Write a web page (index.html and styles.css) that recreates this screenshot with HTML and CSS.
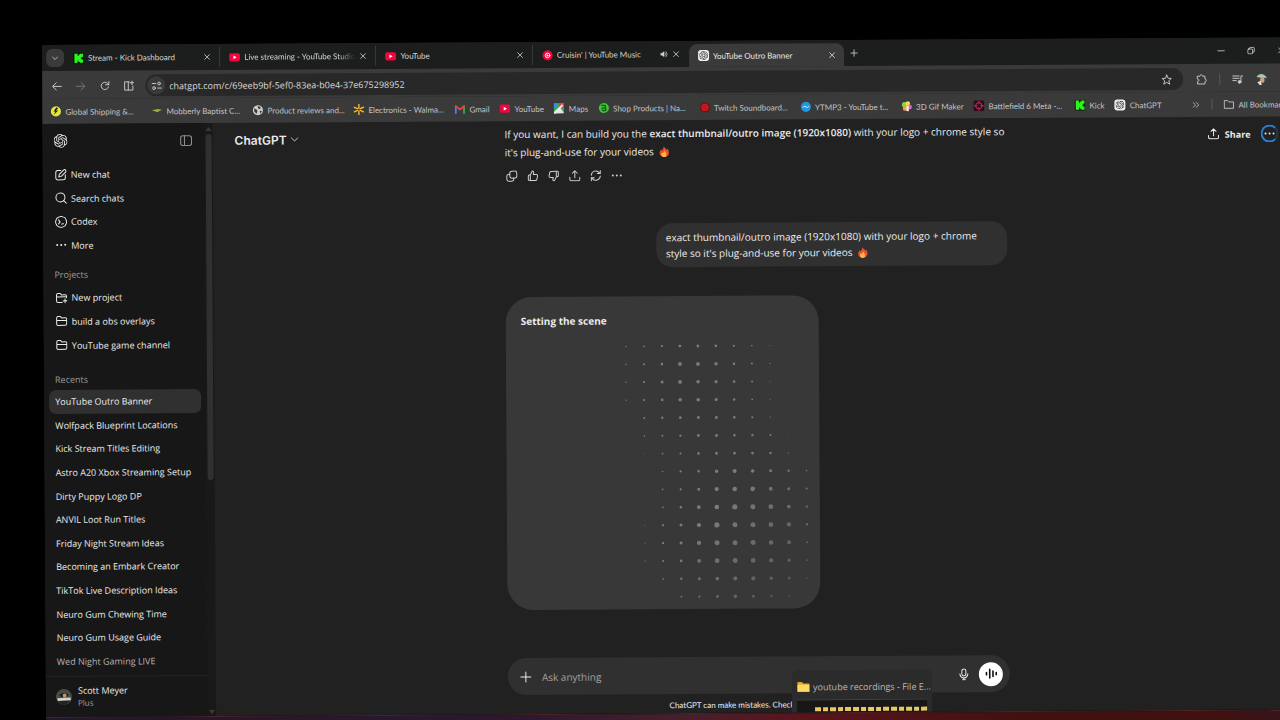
FILE: index.html
```
<!DOCTYPE html>
<html lang="en">

<head>
    <meta charset="UTF-8">
    <meta name="viewport" content="width=device-width, initial-scale=1.0">
    <title>YouTube Outro Banner</title>
    <link rel="stylesheet" href="styles.css">
</head>

<body>
    <!-- shared icons -->
    <svg class="sprite" aria-hidden="true">
        <symbol id="close" viewBox="0 0 10 10"><path d="M2 2l6 6M8 2L2 8"/></symbol>
        <symbol id="dots" viewBox="0 0 24 24"><g fill="currentColor" stroke="none"><circle cx="4" cy="12" r="2"/><circle cx="12" cy="12" r="2"/><circle cx="20" cy="12" r="2"/></g></symbol>
        <symbol id="folder" viewBox="0 0 24 24"><path d="M2 19V6a3 3 0 0 1 3-3h4l3 3h7a3 3 0 0 1 3 3v9a3 3 0 0 1-3 3H5a3 3 0 0 1-3-3zM2 11h20"/></symbol>
        <symbol id="upload" viewBox="0 0 24 24"><path d="M12 16V2M7 7l5-5 5 5M2 15v4a3 3 0 0 0 3 3h14a3 3 0 0 0 3-3v-4"/></symbol>
        <symbol id="thumb" viewBox="0 0 24 24"><path d="M7 10v11M7 10l4-8c2 0 3 1 3 3l-1 4h6a2.500 2.500 0 0 1 2.500 3l-1.500 7a3 3 0 0 1-3 2H5a2 2 0 0 1-2-2v-7a2 2 0 0 1 2-2z"/></symbol>
        <symbol id="youtube" viewBox="0 0 24 24"><rect x="0" y="3" width="24" height="18" rx="5" fill="#f0053c" stroke="none"/><path d="M9.500 8v8l7-4z" fill="#fff" stroke="none"/></symbol>
        <symbol id="kick" viewBox="0 0 24 24"><rect width="24" height="24" fill="#0b1a08" stroke="none"/><path d="M3 2h7v5h2V4h3V2h7v7h-3v2h-2v2h2v2h3v7h-7v-2h-3v-3h-2v5H3z" fill="#2af51c" stroke="none"/></symbol>
        <symbol id="openai" viewBox="0 0 24 24"><path fill="currentColor" stroke="none" d="M22.2819 9.8211a5.9847 5.9847 0 0 0-.5157-4.9108 6.0462 6.0462 0 0 0-6.5098-2.9A6.0651 6.0651 0 0 0 4.9807 4.1818a5.9847 5.9847 0 0 0-3.9977 2.9 6.0462 6.0462 0 0 0 .7427 7.0966 5.98 5.98 0 0 0 .511 4.9107 6.051 6.051 0 0 0 6.5146 2.9001A5.9847 5.9847 0 0 0 13.2599 24a6.0557 6.0557 0 0 0 5.7718-4.2058 5.9894 5.9894 0 0 0 3.9977-2.9001 6.0557 6.0557 0 0 0-.7475-7.0729zm-9.022 12.6081a4.4755 4.4755 0 0 1-2.8764-1.0408l.1419-.0804 4.7783-2.7582a.7948.7948 0 0 0 .3927-.6813v-6.7369l2.02 1.1686a.071.071 0 0 1 .038.052v5.5826a4.504 4.504 0 0 1-4.4945 4.4944zm-9.6607-4.1254a4.4708 4.4708 0 0 1-.5346-3.0137l.142.0852 4.783 2.7582a.7712.7712 0 0 0 .7806 0l5.8428-3.3685v2.3324a.0804.0804 0 0 1-.0332.0615L9.74 19.9502a4.4992 4.4992 0 0 1-6.1408-1.6464zM2.3408 7.8956a4.485 4.485 0 0 1 2.3655-1.9728V11.6a.7664.7664 0 0 0 .3879.6765l5.8144 3.3543-2.0201 1.1685a.0757.0757 0 0 1-.071 0l-4.8303-2.7865A4.504 4.504 0 0 1 2.3408 7.872zm16.5963 3.8558L13.1038 8.364 15.1192 7.2a.0757.0757 0 0 1 .071 0l4.8303 2.7913a4.4944 4.4944 0 0 1-.6765 8.1042v-5.6772a.79.79 0 0 0-.407-.667zm2.0107-3.0231l-.142-.0852-4.7735-2.7818a.7759.7759 0 0 0-.7854 0L9.409 9.2297V6.8974a.0662.0662 0 0 1 .0284-.0615l4.8303-2.7866a4.4992 4.4992 0 0 1 6.6802 4.66zM8.3065 12.863l-2.02-1.1638a.0804.0804 0 0 1-.038-.0567V6.0742a4.4992 4.4992 0 0 1 7.3757-3.4537l-.142.0805L8.704 5.459a.7948.7948 0 0 0-.3927.6813zm1.0976-2.3654l2.602-1.4998 2.6069 1.4998v2.9994l-2.5974 1.4997-2.6067-1.4997Z"/></symbol>
        <symbol id="fire" viewBox="0 0 24 24"><g stroke="none"><path d="M11 0c1 3 5 5 7 8 1-1 1-2 1-3 3 4 4 8 3 12-1 4-5 7-10 7S2 21 2 15c0-4 2-6 4-9 0 2 0 3 1 4 2-3 4-6 4-10z" fill="#e8502a"/><path d="M12 9c1 3 5 4 5 9 0 3-2 6-5 6s-6-2-6-6c0-2 1-4 2-5 0 1 1 2 2 2 1-2 2-3 2-6z" fill="#ffb54a"/></g></symbol>
    </svg>

    <div class="desktop">
        <div class="browser">
            <div class="tab-strip">
                <button class="tab-search" aria-label="Search tabs"><svg class="icon tiny" viewBox="0 0 10 10"><path d="M2 4l3 3 3-3"/></svg></button>
                <div class="tabs">
                    <div class="tab">
                        <svg class="icon small"><use href="#kick"/></svg>
                        <span class="tab-title">Stream - Kick Dashboard</span>
                        <button aria-label="Close tab"><svg class="icon tiny"><use href="#close"/></svg></button>
                    </div>
                    <div class="tab">
                        <svg class="icon small"><use href="#youtube"/></svg>
                        <span class="tab-title fade">Live streaming - YouTube Studio</span>
                        <button aria-label="Close tab"><svg class="icon tiny"><use href="#close"/></svg></button>
                    </div>
                    <div class="tab">
                        <svg class="icon small"><use href="#youtube"/></svg>
                        <span class="tab-title">YouTube</span>
                        <button aria-label="Close tab"><svg class="icon tiny"><use href="#close"/></svg></button>
                    </div>
                    <div class="tab">
                        <svg class="icon small" viewBox="0 0 24 24"><circle cx="12" cy="12" r="11" fill="#f0053c" stroke="none"/><circle cx="12" cy="12" r="5" stroke="#fff"/><path d="M10 9v6l5-3z" fill="#fff" stroke="none"/></svg>
                        <span class="tab-title">Cruisin' | YouTube Music</span>
                        <button aria-label="Mute tab"><svg class="icon tiny" viewBox="0 0 24 24"><path d="M2 9v6h4l6 5V4L6 9z" fill="currentColor"/><path d="M15 8q4 4 0 8M18 4q7 8 0 16" stroke-width="2"/></svg></button>
                        <button aria-label="Close tab"><svg class="icon tiny"><use href="#close"/></svg></button>
                    </div>
                    <div class="tab active">
                        <span class="app-icon"><svg class="icon"><use href="#openai"/></svg></span>
                        <span class="tab-title">YouTube Outro Banner</span>
                        <button aria-label="Close tab"><svg class="icon tiny"><use href="#close"/></svg></button>
                    </div>
                </div>
                <button class="new-tab" aria-label="New tab"><svg class="icon tiny" viewBox="0 0 10 10"><path d="M5 1v8M1 5h8"/></svg></button>
                <div class="window-controls">
                    <button aria-label="Minimize"><svg class="icon tiny" viewBox="0 0 10 10"><path d="M1 5h8"/></svg></button>
                    <button aria-label="Restore"><svg class="icon tiny" viewBox="0 0 10 10"><path d="M3 3V2q0-1 1-1h4q1 0 1 1v4q0 1-1 1H7"/><rect x="1" y="3" width="6" height="6" rx="1"/></svg></button>
                    <button aria-label="Close window"><svg class="icon tiny"><use href="#close"/></svg></button>
                </div>
            </div>

            <div class="toolbar">
                <button aria-label="Back"><svg class="icon small" viewBox="0 0 24 24"><path d="M22 12H4M11 4l-8 8 8 8"/></svg></button>
                <button class="dim" aria-label="Forward"><svg class="icon small" viewBox="0 0 24 24"><path d="M2 12h18M13 4l8 8-8 8"/></svg></button>
                <button aria-label="Reload"><svg class="icon small" viewBox="0 0 24 24"><path d="M20 14a8 8 0 1 1-2-8l3 3M21 2v7h-7"/></svg></button>
                <button aria-label="Split view"><svg class="icon small" viewBox="0 0 24 24"><path d="M13 3H3v18h18V12M11 3v18M19 1v8M15 5h8"/></svg></button>
                <div class="address-bar">
                    <button class="site-info" aria-label="Site information"><svg class="icon small" viewBox="0 0 24 24"><path d="M2 7h8M14 17h8"/><circle cx="17" cy="7" r="3"/><circle cx="6" cy="17" r="3"/></svg></button>
                    <input type="text" aria-label="Address" value="chatgpt.com/c/69eeb9bf-5ef0-83ea-b0e4-37e675298952">
                    <button aria-label="Bookmark this page"><svg class="icon small" viewBox="0 0 24 24"><path d="M12 2l3 7 7 .500-5.500 5 2 7.500-6.500-4-6.500 4 2-7.500L2 9.500 9 9z"/></svg></button>
                </div>
                <div class="toolbar-end">
                    <button aria-label="Extensions"><svg class="icon small" viewBox="0 0 24 24"><path d="M3 5h5c0-4 6-4 6 0h5v6c4 0 4 6 0 6v5H3v-6c4 0 4-5 0-5z"/></svg></button>
                    <span class="divider"></span>
                    <button aria-label="Media controls"><svg class="icon small" viewBox="0 0 24 24"><path d="M1 5h14M1 10h14M1 15h8M19 17V5h4"/><circle cx="16" cy="18" r="3" fill="currentColor"/></svg></button>
                    <button aria-label="Profile"><svg class="icon medium" viewBox="0 0 24 24"><g stroke="none"><circle cx="12" cy="12" r="11" fill="#34413c"/><path d="M2 8Q8 0 16 4l6 5-8 1z" fill="#a6c9b8"/><rect x="9" y="8" width="8" height="11" rx="4" fill="#d49a85"/><path d="M4 18l6-3 2 8H8z" fill="#e6dccf"/></g></svg></button>
                </div>
            </div>

            <nav class="bookmarks" aria-label="Bookmarks">
                <a class="wide" href="#"><svg class="icon small" viewBox="0 0 24 24"><g stroke="none"><circle cx="12" cy="12" r="11" fill="#e4e63c"/><path d="M13 3l-6 9h4l-4 8 10-10h-5l5-5z" fill="#222"/></g></svg>Global Shipping &amp;...</a>
                <a class="wide" href="#"><svg class="icon small" viewBox="0 0 24 24"><path d="M1 11l12-3 10 2-10 5z" fill="#a5a832" stroke="none"/></svg>Mobberly Baptist C...</a>
                <a class="wide" href="#"><svg class="icon small" viewBox="0 0 24 24"><g stroke="none"><circle cx="12" cy="12" r="11" fill="#cfcfcf"/><path d="M4 8l6 3 1 4-2 5-5-5zM12 3l6 2-1 5-5-2zM16 13l5 1-4 6z" fill="#3c3c3c"/></g></svg>Product reviews and...</a>
                <a class="wide" href="#"><svg class="icon small" viewBox="0 0 24 24"><path d="M12 1v8M12 15v8M2 7l7 3M15 14l7 3M2 17l7-3M15 10l7-3" stroke="#f5bb35" stroke-width="3"/></svg>Electronics - Walma...</a>
                <a href="#"><svg class="icon small" viewBox="0 0 24 24"><g fill="none" stroke-width="4"><path d="M3 21V6" stroke="#4285f4"/><path d="M21 21V6" stroke="#34a853"/><path d="M3 6l9 7 9-7" stroke="#ea4335"/></g></svg>Gmail</a>
                <a href="#"><svg class="icon small"><use href="#youtube"/></svg>YouTube</a>
                <a href="#"><svg class="icon small" viewBox="0 0 24 24"><g stroke="none"><path d="M1 1h22v22H1z" fill="#34a853"/><path d="M1 23L15 9l8 14z" fill="#e4e4e4"/><path d="M1 1h11l-9 10H1z" fill="#4285f4"/><path d="M12 5a5 5 0 0 1 11 0c0 4-4 5-5 10-2-5-6-6-6-10z" fill="#ea4335"/><path d="M1 20L19 3l2 4L5 23H1z" fill="#e8edf5"/></g></svg>Maps</a>
                <a class="wide" href="#"><svg class="icon small" viewBox="0 0 24 24"><circle cx="12" cy="12" r="11" fill="#3cc92e" stroke="none"/><path d="M7 6h5q5 0 3 4-2 3-7 2M8 16q2 3 8 1v-4" stroke="#16581a" stroke-width="3"/></svg>Shop Products | Na...</a>
                <a class="wide" href="#"><svg class="icon small" viewBox="0 0 24 24"><circle cx="12" cy="12" r="11" fill="#790d12" stroke="none"/><circle cx="12" cy="12" r="7" fill="#b9171c" stroke="#dc2026"/></svg>Twitch Soundboard...</a>
                <a class="wide" href="#"><svg class="icon small" viewBox="0 0 24 24"><circle cx="12" cy="12" r="11" fill="#2196e3" stroke="none"/><path d="M6 13q3-5 6-1t6-1" stroke="#fff"/></svg>YTMP3 - YouTube t...</a>
                <a href="#"><svg class="icon small" viewBox="0 0 24 24"><g stroke="none"><circle cx="7" cy="9" r="6" fill="#8bd03e"/><circle cx="14" cy="6" r="5" fill="#f4dd4c"/><circle cx="18" cy="14" r="5" fill="#e765b7"/><circle cx="8" cy="17" r="5" fill="#f3a33b"/><path d="M11 11h5v12h-5z" fill="#f6eee9"/></g></svg>3D Gif Maker</a>
                <a class="wide" href="#"><svg class="icon small" viewBox="0 0 24 24"><rect width="24" height="24" rx="4" fill="#29101a" stroke="none"/><circle cx="12" cy="12" r="7" stroke="#d3275c"/><path d="M12 2v6M12 16v6M2 12h6M16 12h6" stroke="#d3275c"/></svg>Battlefield 6 Meta -...</a>
                <a href="#"><svg class="icon small"><use href="#kick"/></svg>Kick</a>
                <a href="#"><span class="app-icon"><svg class="icon"><use href="#openai"/></svg></span>ChatGPT</a>
                <div class="bookmarks-end">
                    <button aria-label="More bookmarks"><svg class="icon tiny" viewBox="0 0 10 10"><path d="M1 2l3 3-3 3M5 2l3 3-3 3"/></svg></button>
                    <span class="divider"></span>
                    <a href="#"><svg class="icon small" viewBox="0 0 24 24"><path d="M2 20V4h7l3 3h10v13z"/></svg>All Bookmarks</a>
                </div>
            </nav>

            <div class="page">
                <aside class="sidebar">
                    <div class="sidebar-top">
                        <svg class="icon logo"><use href="#openai"/></svg>
                        <button class="dim" aria-label="Close sidebar"><svg class="icon medium" viewBox="0 0 24 24"><rect x="2" y="3" width="20" height="18" rx="4"/><path d="M9 3v18"/></svg></button>
                    </div>
                    <nav class="menu">
                        <a href="#"><svg class="icon" viewBox="0 0 24 24"><path d="M12 3H6a4 4 0 0 0-4 4v11a4 4 0 0 0 4 4h11a4 4 0 0 0 4-4v-6M8 16l1-5 9-9c2-2 6 2 4 4l-9 9z"/></svg>New chat</a>
                        <a href="#"><svg class="icon" viewBox="0 0 24 24"><circle cx="11" cy="11" r="9"/><path d="M17 17l6 6"/></svg>Search chats</a>
                        <a href="#"><svg class="icon" viewBox="0 0 24 24"><path d="M8 2q4-2 8 0 5 1 6 6 2 4 0 8-1 5-6 6-4 2-8 0-5-1-6-6-2-4 0-8 1-5 6-6zM7 8l3 4-3 4M13 16h4"/></svg>Codex</a>
                        <a href="#"><svg class="icon"><use href="#dots"/></svg>More</a>
                    </nav>
                    <h2>Projects</h2>
                    <nav class="projects">
                        <a href="#"><svg class="icon" viewBox="0 0 24 24"><path d="M13 21H5a3 3 0 0 1-3-3V6a3 3 0 0 1 3-3h4l3 3h7a3 3 0 0 1 3 3v3M2 10h18M19 14v8M15 18h8"/></svg>New project</a>
                        <a href="#"><svg class="icon"><use href="#folder"/></svg>build a obs overlays</a>
                        <a href="#"><svg class="icon"><use href="#folder"/></svg>YouTube game channel</a>
                    </nav>
                    <h2 class="recents-title">Recents</h2>
                    <nav class="recents">
                        <a class="current" href="#">YouTube Outro Banner</a>
                        <a href="#">Wolfpack Blueprint Locations</a>
                        <a href="#">Kick Stream Titles Editing</a>
                        <a href="#">Astro A20 Xbox Streaming Setup</a>
                        <a href="#">Dirty Puppy Logo DP</a>
                        <a href="#">ANVIL Loot Run Titles</a>
                        <a href="#">Friday Night Stream Ideas</a>
                        <a href="#">Becoming an Embark Creator</a>
                        <a href="#">TikTok Live Description Ideas</a>
                        <a href="#">Neuro Gum Chewing Time</a>
                        <a href="#">Neuro Gum Usage Guide</a>
                        <a class="faded" href="#">Wed Night Gaming LIVE</a>
                    </nav>
                    <button class="account">
                        <svg class="avatar" viewBox="0 0 24 24"><circle cx="12" cy="12" r="12" fill="#4a4b45"/><path d="M5 9q7-6 14 0l-3 3H8z" fill="#191919"/><circle cx="13" cy="10" r="3" fill="#bd9576"/><path d="M2 14l20-1v4l-19 1z" fill="#d5d2c8"/><path d="M3 18h18q-9 12-18 0z" fill="#222"/></svg>
                        <span><b>Scott Meyer</b><small>Plus</small></span>
                    </button>
                </aside>
                <div class="scrollbar">
                    <svg viewBox="0 0 8 8"><path d="M1 6l3-4 3 4z"/></svg>
                    <span></span>
                    <svg viewBox="0 0 8 8"><path d="M1 2l3 4 3-4z"/></svg>
                </div>

                <main>
                    <header>
                        <button class="model">ChatGPT<svg class="icon tiny" viewBox="0 0 10 10"><path d="M1 3l4 4 4-4"/></svg></button>
                        <button class="share"><svg class="icon"><use href="#upload"/></svg>Share</button>
                        <button class="more" aria-label="More options"><svg class="icon"><use href="#dots"/></svg></button>
                    </header>

                    <div class="thread">
                        <p class="answer">If you want, I can build you the <b>exact thumbnail/outro image (1920x1080)</b> with your logo + chrome style so it's plug-and-use for your videos <svg class="emoji"><use href="#fire"/></svg></p>
                        <div class="actions">
                            <button aria-label="Copy"><svg class="icon" viewBox="0 0 24 24"><rect x="8" y="2" width="14" height="14" rx="4"/><path d="M8 8H6a4 4 0 0 0-4 4v6a4 4 0 0 0 4 4h6a4 4 0 0 0 4-4v-2"/></svg></button>
                            <button aria-label="Good response"><svg class="icon"><use href="#thumb"/></svg></button>
                            <button aria-label="Bad response"><svg class="icon flip"><use href="#thumb"/></svg></button>
                            <button aria-label="Share"><svg class="icon"><use href="#upload"/></svg></button>
                            <button aria-label="Try again"><svg class="icon" viewBox="0 0 24 24"><path d="M3 11a9 9 0 0 1 16-5l2 2M21 2v6h-6M21 13a9 9 0 0 1-16 5l-2-2M3 22v-6h6"/></svg></button>
                            <button aria-label="More actions"><svg class="icon"><use href="#dots"/></svg></button>
                        </div>
                        <p class="bubble">exact thumbnail/outro image (1920x1080) with your logo + chrome style so it's plug-and-use for your videos <svg class="emoji"><use href="#fire"/></svg></p>
                        <div class="image-card">
                            <h3>Setting the scene</h3>
                            <svg id="dot-grid" viewBox="0 0 313 277"></svg>
                        </div>
                    </div>

                    <form class="composer">
                        <button type="button" aria-label="Add files"><svg class="icon" viewBox="0 0 24 24"><path d="M12 2v20M2 12h20"/></svg></button>
                        <input type="text" placeholder="Ask anything" aria-label="Ask anything">
                        <button type="button" aria-label="Dictate"><svg class="icon" viewBox="0 0 24 24"><rect x="8" y="1" width="8" height="14" rx="4"/><path d="M4 11q1 8 8 8t8-8M12 19v4M9 23h6"/></svg></button>
                        <button type="button" class="voice" aria-label="Voice mode"><svg class="icon medium" viewBox="0 0 24 24"><path d="M3 10v4M9 4v16M15 7v10M21 10v4" stroke-width="3"/></svg></button>
                    </form>
                    <p class="disclaimer">ChatGPT can make mistakes. Check important info.</p>
                </main>
                <div class="page-scroll"></div>
            </div>

            <!-- taskbar hover preview -->
            <div class="preview">
                <div class="preview-title"><svg class="icon medium" viewBox="0 0 24 24"><g stroke="none"><path d="M1 3h8l3 3h11v15H1z" fill="#e0a82f"/><path d="M1 8h22v13H1z" fill="#ffd85f"/></g></svg>youtube recordings - File E...</div>
                <div class="preview-window">
                    <i></i><i></i><i></i><i></i><i></i><i></i><i></i><i></i><i></i><i></i><i></i><i></i><i></i><i></i><i></i>
                </div>
            </div>
        </div>
        <div class="taskbar"></div>
    </div>
    <script src="dots.js"></script>
</body>

</html>
```
FILE: styles.css
```
* {
    box-sizing: border-box;
}

body {
    margin: 0;
    background-color: #000;
    color: #ececec;
    font-family: 'Open Sans', 'Noto Sans', sans-serif;
    font-size: 9px;
    overflow: hidden;
}

h2, h3, p {
    margin: 0;
}

a {
    color: inherit;
    text-decoration: none;
}

button, input {
    font: inherit;
    color: inherit;
    background: none;
    border: none;
    padding: 0;
    margin: 0;
    outline: none;
}

button {
    display: flex;
    align-items: center;
    justify-content: center;
    cursor: pointer;
    flex: none;
}

.sprite {
    display: none;
}

.icon {
    width: 12px;
    height: 12px;
    flex: none;
    fill: none;
    stroke: currentColor;
    stroke-width: 2;
    stroke-linecap: round;
    stroke-linejoin: round;
}

.icon.tiny {
    width: 8px;
    height: 8px;
    stroke-width: 1;
}

.icon.small {
    width: 11px;
    height: 11px;
}

.icon.medium {
    width: 13px;
    height: 13px;
}

.icon.logo {
    width: 14px;
    height: 14px;
}

.flip {
    transform: rotate(180deg);
}

.dim {
    color: #8e8e8e;
}

.divider {
    width: 1px;
    height: 11px;
    background-color: #5a5a5a;
}

/* The whole screen is seen at a slight tilt */
.desktop {
    height: 100vh;
    padding: 45px 0 0 42px;
    margin-right: -24px;
    transform: rotate(-0.35deg);
    transform-origin: 42px 45px;
}

.browser {
    position: relative;
    height: calc(100vh - 48px);
    display: flex;
    flex-direction: column;
    background-color: #212121;
}

.taskbar {
    height: 30px;
    background: linear-gradient(90deg, #24162d, #2c1830 38%, #45202c 50%, #5a141c 60%, #40110f 78%, #40110f 92%, #351520);
    border-top: 1px solid #4d2426;
}

/* tabs */
.tab-strip, .bookmarks, .disclaimer {
    font-family: Lato, 'Open Sans', sans-serif;
    font-size: 8px;
}

.tab-strip {
    display: flex;
    align-items: center;
    height: 26px;
    padding-left: 4px;
    background-color: #1c1e1d;
    color: #d5d5d5;
}

.tab-search {
    width: 18px;
    height: 18px;
    border-radius: 6px;
    background-color: #3a3a3a;
}

.tabs {
    display: flex;
    align-self: stretch;
    width: 780px;
    padding-top: 3px;
}

.tab {
    flex: 1 1 0;
    min-width: 0;
    display: flex;
    align-items: center;
    gap: 4px;
    height: 20px;
    padding: 0 8px 0 9px;
    border-right: 1px solid #3a3a3a;
}

.tab:nth-child(4) {
    border-right-color: transparent;
}

.tab-title {
    flex: 1;
    overflow: hidden;
    white-space: nowrap;
}

.fade {
    -webkit-mask-image: linear-gradient(90deg, #000 85%, transparent);
    mask-image: linear-gradient(90deg, #000 85%, transparent);
}

.tab.active {
    height: 23px;
    border: none;
    border-radius: 8px 8px 0 0;
    background-color: #3a3a3a;
    color: #ececec;
}

.app-icon {
    display: flex;
    flex: none;
    padding: 1px;
    border-radius: 3px;
    background-color: #f2f2f2;
    color: #333;
}

.app-icon .icon {
    width: 9px;
    height: 9px;
}

.new-tab {
    margin-left: 6px;
}

.window-controls {
    display: flex;
    margin-left: auto;
    margin-right: 19px;
    gap: 22px;
}

/* toolbar */
.toolbar {
    display: flex;
    align-items: center;
    gap: 13px;
    padding: 4px 0 2px 9px;
    background-color: #3a3a3a;
    color: #cfcfcf;
}

.toolbar .dim {
    color: #7a7a7a;
}

.address-bar {
    flex: 1;
    display: flex;
    align-items: center;
    gap: 4px;
    height: 22px;
    margin-left: -2px;
    padding: 0 11px 0 2px;
    border-radius: 11px;
    background-color: #282828;
}

.address-bar input {
    flex: 1;
    color: #d8d8d8;
}

.site-info {
    width: 18px;
    height: 18px;
    border-radius: 9px;
    background-color: #3a3a3a;
}

.toolbar-end {
    display: flex;
    align-items: center;
    gap: 12px;
    width: 108px;
}

/* bookmarks */
.bookmarks {
    display: flex;
    align-items: center;
    gap: 10px;
    height: 25px;
    padding-left: 8px;
    background-color: #3a3a3a;
    color: #c4c4c4;
    white-space: nowrap;
}

.bookmarks a {
    display: flex;
    align-items: center;
    gap: 4px;
}

.bookmarks .wide {
    width: 91px;
}

.bookmarks-end {
    display: flex;
    align-items: center;
    gap: 11px;
    width: 112px;
    margin-left: auto;
}

/* chat page */
.page {
    flex: 1;
    min-height: 0;
    display: flex;
}

.sidebar {
    flex: none;
    display: flex;
    flex-direction: column;
    width: 162px;
    background-color: #171717;
}

.sidebar-top {
    display: flex;
    align-items: center;
    justify-content: space-between;
    height: 34px;
    padding: 0 12px 0 11px;
    margin-bottom: 5px;
}

.menu, .projects, .recents {
    display: grid;
    grid-auto-rows: 1fr;
    padding: 0 5px 0 6px;
}

.menu {
    height: 94px;
}

.projects {
    height: 71px;
}

.menu a, .projects a, .recents a {
    display: flex;
    align-items: center;
    gap: 4px;
    padding: 0 6px;
    white-space: nowrap;
}

.sidebar h2 {
    padding-left: 11px;
    margin: 11px 0 4px;
    font-size: 9px;
    line-height: 14px;
    font-weight: normal;
    color: #9b9b9b;
}

.sidebar .recents-title {
    margin: 16px 0 3px;
}

.recents {
    flex: 1;
    margin-bottom: 3px;
    padding: 0 5px;
}

.recents .current {
    border-radius: 7px;
    background-color: #303030;
}

.recents .faded {
    color: #b4b4b4;
}

.account {
    justify-content: flex-start;
    gap: 6px;
    height: 41px;
    padding-left: 10px;
    border-top: 1px solid #242424;
    text-align: left;
}

.account b, .account small {
    display: block;
    font-weight: normal;
    line-height: 12px;
}

.account small {
    font-size: 8px;
    color: #a0a0a0;
}

.avatar {
    width: 16px;
    height: 16px;
}

.scrollbar {
    display: flex;
    flex: none;
    flex-direction: column;
    width: 8px;
    background-color: #191919;
    fill: #3a3a3a;
}

.scrollbar svg {
    height: 8px;
    margin-top: 2px;
}

.scrollbar span {
    width: 6px;
    height: 346px;
    margin: 1px 1px auto;
    border-radius: 3px;
    background-color: #303030;
}

.page-scroll {
    width: 6px;
    background-color: #2a2a2a;
}

main {
    position: relative;
    flex: 1;
    display: flex;
    flex-direction: column;
    align-items: center;
}

header {
    position: absolute;
    top: 0;
    left: 0;
    right: 0;
    display: flex;
    align-items: center;
    height: 34px;
    padding: 0 20px 0 22px;
}

.model {
    gap: 4px;
    font-family: Inter, sans-serif;
    font-size: 12px;
    font-weight: 600;
}

.share {
    gap: 5px;
    margin-left: auto;
    font-weight: 700;
}

.more {
    width: 18px;
    height: 18px;
    margin-left: 10px;
    border: 2px solid #2b7fd0;
    border-right-color: #26394c;
    border-radius: 9px;
}

.thread {
    flex: 1;
    display: flex;
    flex-direction: column;
    width: 100%;
    max-width: 502px;
    padding-top: 4px;
}

.answer, .bubble, .image-card h3, .composer {
    font-size: 10px;
}

.answer {
    margin-right: -8px;
    line-height: 18px;
}

.answer b {
    font-weight: 600;
}

.emoji {
    width: 11px;
    height: 11px;
    margin-left: 2px;
    vertical-align: -2px;
}

.actions {
    display: flex;
    gap: 9px;
    margin: 9px 0 42px 1px;
    color: #d0d0d0;
}

.bubble {
    align-self: flex-end;
    width: 70%;
    padding: 6px 10px;
    border-radius: 16px;
    background-color: #303030;
    line-height: 16px;
}

.image-card {
    width: 313px;
    height: 313px;
    margin-top: 29px;
    border-radius: 26px;
    background-color: #383838;
}

.image-card h3 {
    padding: 16px 15px 4px;
    line-height: 16px;
    font-weight: 700;
}

#dot-grid {
    display: block;
    width: 100%;
    fill: #8c8c8c;
}

.composer {
    display: flex;
    align-items: center;
    width: 100%;
    max-width: 502px;
    height: 37px;
    padding: 0 7px 0 12px;
    border-radius: 19px;
    background-color: #303030;
}

.composer input {
    flex: 1;
    margin-left: 10px;
}

.composer input::placeholder {
    color: #a3a3a3;
    opacity: 1;
}

.voice {
    width: 24px;
    height: 24px;
    margin-left: 9px;
    border-radius: 12px;
    background-color: #fff;
    color: #111;
}

.disclaimer {
    padding: 5px 0 2px;
    line-height: 12px;
    white-space: nowrap;
}

.preview {
    position: absolute;
    left: 746px;
    bottom: 0;
    width: 140px;
    padding: 9px 5px 0;
    border-radius: 5px 5px 0 0;
    background-color: #2b2b2b;
    color: #b9b9b9;
    white-space: nowrap;
}

.preview-title {
    display: flex;
    align-items: center;
    gap: 3px;
    height: 14px;
    margin-bottom: 6px;
}

.preview-window {
    display: flex;
    align-items: flex-end;
    gap: 2px;
    height: 13px;
    padding: 0 0 1px 18px;
    border-top: 1px solid #414141;
    background-color: #171717;
}

.preview-window i {
    flex: 1;
    height: 4px;
    background-color: #e9c862;
}
```
FILE: dots.js
```
// dot radius in tenths of a pixel, one row per line
const rows = [
    [7, 9, 11, 14, 14, 13, 11, 8, 5, 0, 0],
    [8, 11, 13, 19, 19, 17, 13, 10, 6, 0, 0],
    [8, 11, 15, 19, 18, 16, 14, 10, 5, 0, 0],
    [7, 11, 13, 18, 18, 16, 13, 9, 5, 0, 0],
    [0, 10, 12, 14, 15, 15, 13, 10, 6, 0, 0],
    [0, 8, 10, 12, 14, 15, 13, 12, 10, 4, 0],
    [0, 4, 9, 11, 13, 15, 14, 14, 12, 7, 0],
    [0, 0, 8, 11, 13, 17, 20, 18, 15, 12, 8],
    [0, 0, 8, 11, 15, 21, 23, 23, 19, 15, 11],
    [0, 0, 9, 13, 19, 23, 26, 25, 24, 19, 12],
    [0, 5, 11, 15, 21, 26, 25, 25, 24, 21, 13],
    [0, 5, 12, 15, 21, 25, 25, 25, 23, 20, 11],
    [0, 6, 10, 14, 19, 24, 25, 24, 22, 17, 9],
    [0, 0, 8, 12, 15, 19, 21, 21, 18, 13, 7],
    [0, 0, 0, 10, 12, 15, 18, 15, 12, 8, 0]
];

const grid = document.getElementById('dot-grid');
rows.forEach((row, y) => {
    row.forEach((size, x) => {
        if (!size) return;
        const dot = document.createElementNS('http://www.w3.org/2000/svg', 'circle');
        dot.setAttribute('cx', 120 + x * 18);
        dot.setAttribute('cy', 14 + y * 17.9);
        dot.setAttribute('r', size / 10);
        // dots dim towards the lower right
        dot.setAttribute('opacity', Math.max(0.3, 0.8 - Math.max(0, x + y - 14) * 0.05));
        grid.appendChild(dot);
    });
});
```
